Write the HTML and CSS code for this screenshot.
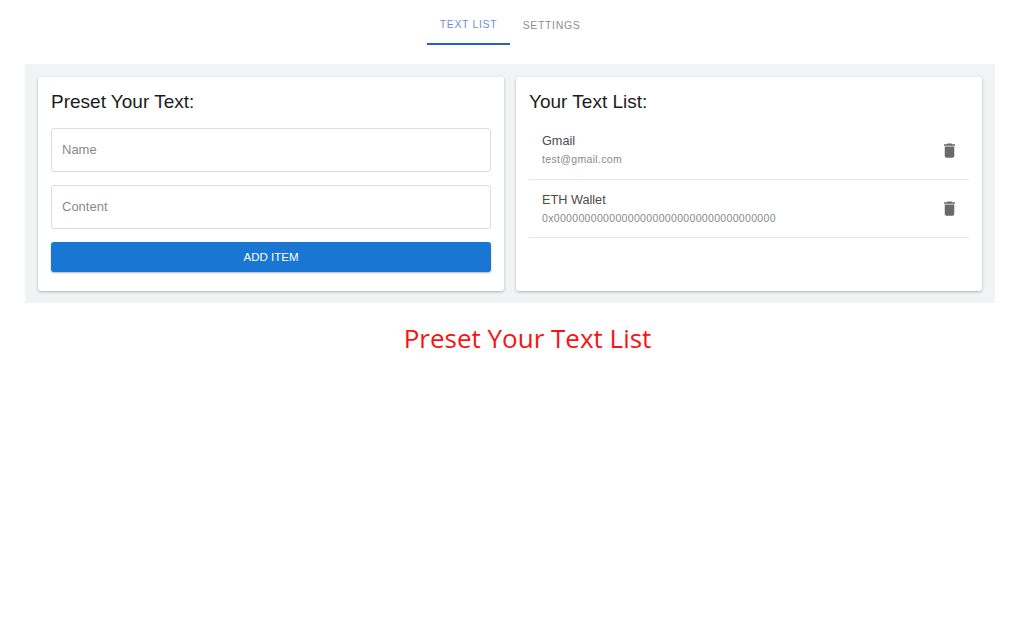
FILE: index.html
```html
<!DOCTYPE html>
<html lang="en">
<head>
<meta charset="utf-8">
<title>Preset Your Text List</title>
<link rel="stylesheet" href="styles.css">
</head>
<body>
<nav class="tabs">
  <div class="tab tab-active">TEXT LIST</div>
  <div class="tab">SETTINGS</div>
</nav>
<main class="panel">
  <section class="card card-form">
    <h2 class="card-title">Preset Your Text:</h2>
    <div class="field">Name</div>
    <div class="field">Content</div>
    <button class="add-btn" type="button">ADD ITEM</button>
  </section>
  <section class="card card-list">
    <h2 class="card-title">Your Text List:</h2>
    <ul class="list">
      <li class="row">
        <div class="row-text">
          <div class="row-name">Gmail</div>
          <div class="row-value">test@gmail.com</div>
        </div>
        <svg class="trash" viewBox="0 0 24 24"><path d="M6 19c0 1.1.9 2 2 2h8c1.1 0 2-.9 2-2V7H6v12zM19 4h-3.500l-1-1h-5l-1 1H5v2h14V4z"/></svg>
      </li>
      <li class="row">
        <div class="row-text">
          <div class="row-name">ETH Wallet</div>
          <div class="row-value">0x000000000000000000000000000000000000</div>
        </div>
        <svg class="trash" viewBox="0 0 24 24"><path d="M6 19c0 1.1.9 2 2 2h8c1.1 0 2-.9 2-2V7H6v12zM19 4h-3.500l-1-1h-5l-1 1H5v2h14V4z"/></svg>
      </li>
    </ul>
  </section>
</main>
<p class="caption">Preset Your Text List</p>
</body>
</html>
```

FILE: styles.css
```css
* { box-sizing: border-box; }
html, body { margin: 0; padding: 0; background: #fff; }
body { font-family: "Liberation Sans", Arial, sans-serif; height: 638px; overflow: hidden; }

.tabs { display: flex; justify-content: center; height: 64px; padding-top: 5px; }
.tab {
  width: 83px; height: 40px; display: flex; align-items: center; justify-content: center;
  font-size: 10.500px; letter-spacing: 0.65px; color: #8f8f8f;
}
.tab-active { color: #6f8fd2; border-bottom: 2px solid #2a5cc4; }

.panel {
  margin: 0 25px; height: 239px; padding: 13px; background: #f2f3f5;
  display: flex; gap: 12px;
}
.card {
  flex: 1; height: 214px; background: #fff; border-radius: 3px;
  box-shadow: 0 1px 3px rgba(0,0,0,.28);
  padding: 13px;
}
.card-title { margin: 0; font-size: 19px; font-weight: 400; line-height: 24px; color: #1c1c1c; }

.field {
  height: 44px; margin-top: 13px; padding-left: 10px; padding-bottom: 2px; display: flex; align-items: center;
  border: 1px solid #dcdcdc; border-radius: 3px;
  font-size: 13px; color: #8a8a8a;
}
.card-title + .field { margin-top: 14px; }
.add-btn {
  display: block; width: 100%; height: 30px; margin-top: 13px; border: 0; border-radius: 3px;
  background: #1976d2; color: #fff; font: 11.500px "Liberation Sans", Arial, sans-serif;
  box-shadow: 0 1px 2px rgba(0,0,0,.3);
}

.list { list-style: none; margin: 7px 0 0; padding: 0; }
.row {
  height: 58px; padding: 0 10px 0 13px; display: flex; align-items: center; justify-content: space-between;
  border-bottom: 1px solid #e8e8e8;
}
.row:first-child { height: 59px; }
.row-name { font-size: 12.700px; line-height: 18px; color: #4c4c4c; }
.row-value { font-size: 10.500px; line-height: 18px; color: #8a8a8a; letter-spacing: 0.33px; }
.trash { width: 19px; height: 19px; fill: #6a6a6a; }

.caption {
  margin: 17px 0 0 35px; text-align: center;
  font-family: "Open Sans", "Noto Sans", sans-serif; font-size: 26px; line-height: 36px; color: #f81414;
}
```
